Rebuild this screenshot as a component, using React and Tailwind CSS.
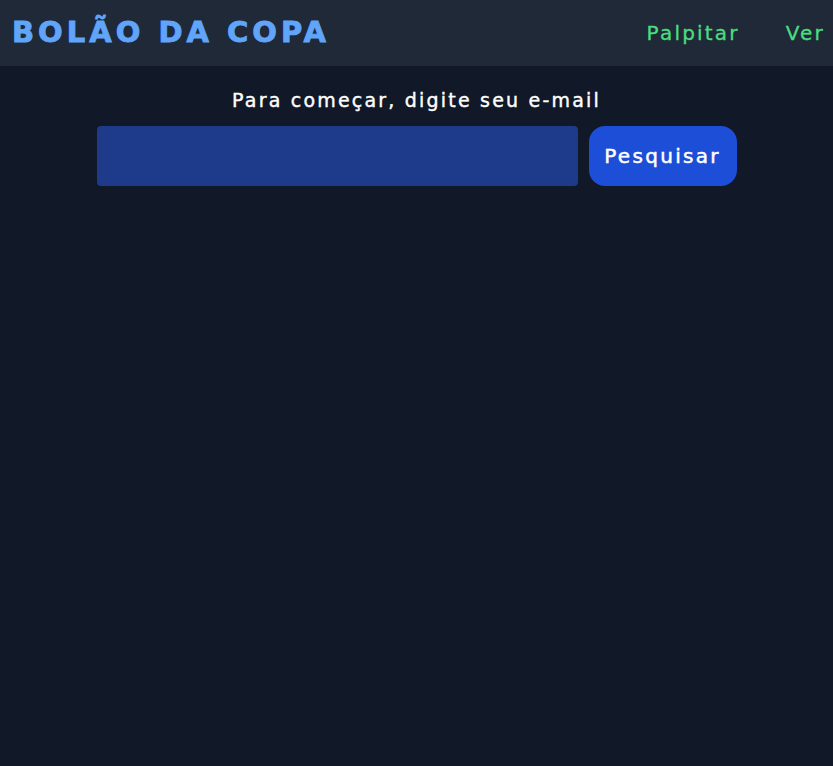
export default function App() {
  return (
    <div className="min-h-screen bg-[#111827] text-white" style={{ fontFamily: '"DejaVu Sans", sans-serif' }}>
      <header className="h-[66px] bg-[#1f2937] flex items-center justify-between pl-3 pr-[8px]">
        <h1 className="text-[29px] font-bold text-[#60a5fa] tracking-[4px] [-webkit-text-stroke:0.9px_#60a5fa]">
          BOLÃO DA COPA
        </h1>
        <nav className="flex items-center gap-[46px] text-[20px] tracking-[2.2px] text-[#4ade80] [-webkit-text-stroke:0.3px_#4ade80]">
          <a href="#">Palpitar</a>
          <a href="#">Ver</a>
        </nav>
      </header>

      <main className="w-[640px] mx-auto pt-5 flex flex-col items-center gap-3">
        <p className="text-[19px] leading-7 tracking-[2.2px] [-webkit-text-stroke:0.4px_white]">
          Para começar, digite seu e-mail
        </p>
        <form className="w-full flex gap-[11px]" onSubmit={(e) => e.preventDefault()}>
          <input type="email" className="flex-1 h-[60px] bg-[#1e3a8a] rounded-[4px] px-3 outline-none text-white" />
          <button
            type="submit"
            className="w-[148px] h-[60px] bg-[#1d4ed8] rounded-2xl text-[20px] tracking-[2.3px] [-webkit-text-stroke:0.5px_white]"
          >
            Pesquisar
          </button>
        </form>
      </main>
    </div>
  );
}
